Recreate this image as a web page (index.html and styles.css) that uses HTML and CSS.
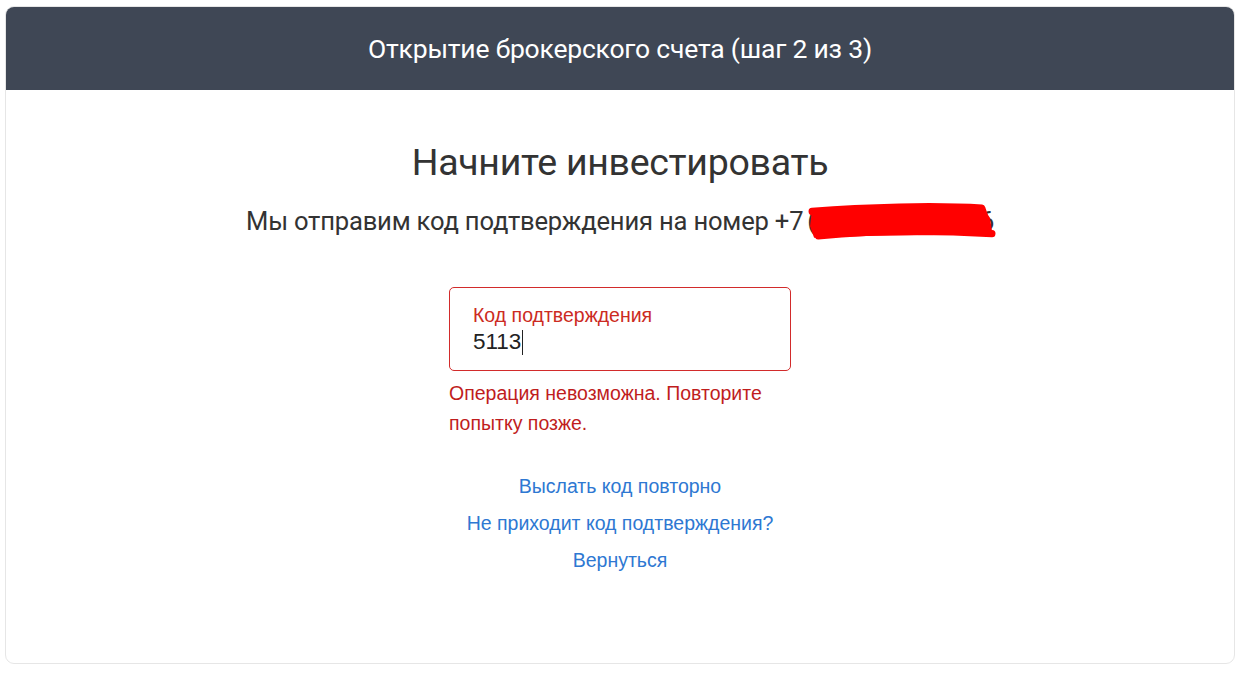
FILE: index.html
```html
<!DOCTYPE html>
<html lang="ru">
<head>
<meta charset="UTF-8" />
<meta name="viewport" content="width=device-width, initial-scale=1" />
<title>Открытие брокерского счета</title>
<link rel="stylesheet" href="styles.css">
</head>
<body>
<main class="card">
  <header class="card-head">Открытие брокерского счета (шаг 2 из 3)</header>

  <section class="card-body">
    <h1>Начните инвестировать</h1>
    <p class="lead">Мы отправим код подтверждения на номер +7<span class="phone">(9XX) XXX-XX-X6<svg class="scribble" viewBox="0 0 190 36" preserveAspectRatio="none"><path d="M8 6 L176 3 L184 14 L186 26 L150 30 L70 31 L10 33 L6 22 Z" fill="#ff0000"/><path d="M8 8 C60 4 130 2 176 5 L180 16 C130 18 60 20 12 24 L14 31 C70 26 130 26 186 29" fill="none" stroke="#ff0000" stroke-width="7" stroke-linecap="round" stroke-linejoin="round"/></svg></span></p>

    <div class="field">
      <label>Код подтверждения</label>
      <div class="value">5113<span class="caret"></span></div>
    </div>
    <p class="error">Операция невозможна. Повторите попытку позже.</p>

    <nav class="links">
      <a href="#">Выслать код повторно</a>
      <a href="#">Не приходит код подтверждения?</a>
      <a href="#">Вернуться</a>
    </nav>
  </section>
</main>
</body>
</html>
```

FILE: styles.css
```css
body {
  margin: 0;
  padding: 6px 1px 0 5px;
  background: #fff;
  font-family: "Liberation Sans", Arial, sans-serif;
}
.card {
  height: 656px;
  border: 1px solid #e6e6e6;
  border-radius: 9px;
  overflow: hidden;
}
.card-head {
  height: 83px;
  background: #3f4755;
  color: #fff;
  font-family: Roboto, sans-serif;
  font-size: 26.5px;
  display: flex;
  align-items: center;
  justify-content: center;
  letter-spacing: -0.2px;
}
.card-body {
  display: flex;
  flex-direction: column;
  align-items: center;
}
h1 {
  margin: 50px 0 0;
  font-family: Roboto, sans-serif;
  font-weight: 400;
  font-size: 37.5px;
  color: #333;
  letter-spacing: -0.3px;
}
.lead {
  margin: 22px 0 0;
  font-family: Roboto, sans-serif;
  font-size: 25.6px;
  color: #333;
  letter-spacing: -0.2px;
}
.phone {
  position: relative;
  margin-left: 4px;
  letter-spacing: -0.5px;
}
.scribble {
  position: absolute;
  left: -3px;
  top: -3px;
  width: 192px;
  height: 38px;
}
.field {
  margin-top: 51px;
  width: 342px;
  height: 84px;
  box-sizing: border-box;
  border: 1px solid #d22b2b;
  border-radius: 5px;
  padding: 15px 23px 0;
}
.field label {
  display: block;
  color: #cc2b22;
  font-size: 19.5px;
  line-height: 24px;
}
.value {
  display: flex;
  align-items: center;
  margin-top: 2px;
  font-size: 22.5px;
  color: #222;
}
.caret {
  width: 1px;
  height: 25px;
  background: #222;
  margin-left: 1px;
}
.error {
  width: 342px;
  margin: 7px 0 0;
  color: #c01d1d;
  font-size: 19.5px;
  line-height: 30px;
}
.links {
  margin-top: 37px;
  display: flex;
  flex-direction: column;
  align-items: center;
  gap: 14px;
}
.links a {
  color: #2e78d2;
  text-decoration: none;
  font-size: 19.5px;
  line-height: 23px;
}
```
